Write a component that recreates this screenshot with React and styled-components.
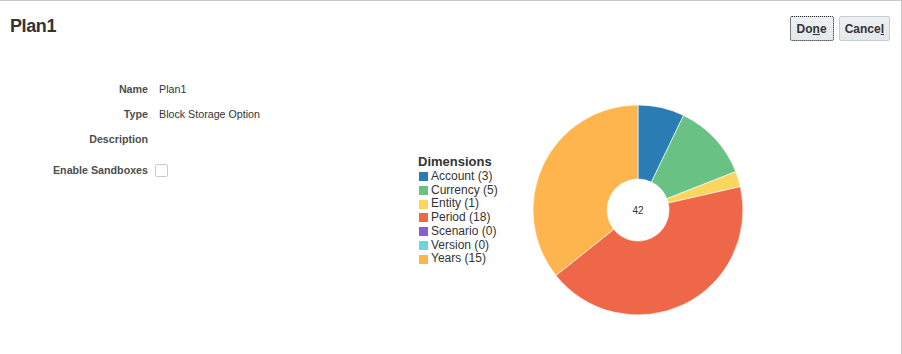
import React from "react";
import styled, { createGlobalStyle } from "styled-components";

const dimensions = [
  { name: "Account", count: 3, color: "#2a7db4" },
  { name: "Currency", count: 5, color: "#69c283" },
  { name: "Entity", count: 1, color: "#fbd65e" },
  { name: "Period", count: 18, color: "#ee6749" },
  { name: "Scenario", count: 0, color: "#8a5fcb" },
  { name: "Version", count: 0, color: "#6ad8da" },
  { name: "Years", count: 15, color: "#ffb54e" },
];

const fields = [
  { label: "Name", value: "Plan1" },
  { label: "Type", value: "Block Storage Option" },
  { label: "Description", value: "" },
];

function point(cx, cy, r, deg) {
  const a = ((deg - 90) * Math.PI) / 180;
  return [cx + r * Math.cos(a), cy + r * Math.sin(a)];
}

function slicePath(cx, cy, r, ir, start, end) {
  const large = end - start > 180 ? 1 : 0;
  const [x1, y1] = point(cx, cy, r, start);
  const [x2, y2] = point(cx, cy, r, end);
  const [x3, y3] = point(cx, cy, ir, end);
  const [x4, y4] = point(cx, cy, ir, start);
  return `M${x1} ${y1} A${r} ${r} 0 ${large} 1 ${x2} ${y2} L${x3} ${y3} A${ir} ${ir} 0 ${large} 0 ${x4} ${y4} Z`;
}

function Donut() {
  const total = dimensions.reduce((s, d) => s + d.count, 0);
  let angle = 0;
  const size = 212;
  const c = size / 2;
  return (
    <svg width={size} height={size} viewBox={`0 0 ${size} ${size}`}>
      {dimensions
        .filter((d) => d.count > 0)
        .map((d) => {
          const start = angle;
          angle += (d.count / total) * 360;
          return (
            <path
              key={d.name}
              d={slicePath(c, c, 105, 31, start, angle)}
              fill={d.color}
              stroke="#fff"
              strokeWidth="0.6"
            />
          );
        })}
      <text
        x={c}
        y={c + 3.5}
        textAnchor="middle"
        fontFamily="Liberation Sans, Arial, sans-serif"
        fontSize="10"
        fill="#333"
      >
        {total}
      </text>
    </svg>
  );
}

export default function App() {
  return (
    <>
      <GlobalStyle />
      <Page>
        <Header>
          <Title>Plan1</Title>
          <Toolbar>
            <Button $focused>
              Do<u>n</u>e
            </Button>
            <Button>
              Cance<u>l</u>
            </Button>
          </Toolbar>
        </Header>
        <Body>
          <Form>
            {fields.map((f) => (
              <React.Fragment key={f.label}>
                <Label>{f.label}</Label>
                <Value>{f.value}</Value>
              </React.Fragment>
            ))}
            <Label $spaced>Enable Sandboxes</Label>
            <Value $spaced>
              <Checkbox />
            </Value>
          </Form>
          <Chart>
            <Legend>
              <LegendTitle>Dimensions</LegendTitle>
              {dimensions.map((d) => (
                <LegendItem key={d.name}>
                  <Swatch $color={d.color} />
                  {d.name} ({d.count})
                </LegendItem>
              ))}
            </Legend>
            <Donut />
          </Chart>
        </Body>
      </Page>
    </>
  );
}

const GlobalStyle = createGlobalStyle`
  body {
    margin: 0;
    background: #fff;
    font-family: "Liberation Sans", Arial, sans-serif;
    color: #333;
  }
`;

const Page = styled.div`
  width: 902px;
  height: 354px;
  box-sizing: border-box;
  border-top: 1px solid #c9c9c9;
  border-right: 1px solid #c9c9c9;
  overflow: hidden;
`;

const Header = styled.div`
  display: flex;
  justify-content: space-between;
  align-items: flex-start;
  height: 59px;
  padding: 0 11px 0 10px;
`;

const Title = styled.h1`
  margin: 15px 0 0;
  font-size: 18px;
  line-height: 20px;
  font-weight: bold;
  letter-spacing: -0.4px;
  color: #333;
`;

const Toolbar = styled.div`
  display: flex;
  gap: 5px;
  margin-top: 15px;
`;

const Button = styled.button`
  height: 25px;
  padding: 0 ${(p) => (p.$focused ? "6px" : "5px")};
  font-family: "Liberation Sans", Arial, sans-serif;
  font-size: 12px;
  font-weight: bold;
  color: #333;
  background: linear-gradient(#eef1f3, #e3e8eb);
  border: 1px solid #c4ccd4;
  border-radius: 2px;
  outline: ${(p) => (p.$focused ? "1px dotted #333" : "none")};
  outline-offset: -1px;
  u {
    text-decoration-thickness: 1px;
  }
`;

const Body = styled.div`
  display: grid;
  grid-template-columns: 418px auto;
`;

const Form = styled.div`
  display: grid;
  grid-template-columns: 148px auto;
  grid-auto-rows: 25px;
  column-gap: 11px;
  align-items: center;
  align-content: start;
  padding-top: 16px;
`;

const Label = styled.div`
  text-align: right;
  font-size: 10.7px;
  font-weight: bold;
  color: #4d4d4d;
  margin-top: ${(p) => (p.$spaced ? "13px" : "0")};
`;

const Value = styled.div`
  display: flex;
  align-items: center;
  font-size: 10.7px;
  color: #333;
  margin-top: ${(p) => (p.$spaced ? "13px" : "0")};
`;

const Checkbox = styled.span`
  display: block;
  width: 13px;
  height: 13px;
  margin-left: -4px;
  box-sizing: border-box;
  border: 1px solid #ccc;
  border-radius: 2px;
  background: #fff;
`;

const Chart = styled.div`
  display: flex;
  align-items: center;
  margin-top: 44px;
`;

const Legend = styled.div`
  width: 114px;
`;

const LegendTitle = styled.div`
  font-size: 13px;
  font-weight: bold;
  line-height: 16px;
  color: #333;
`;

const LegendItem = styled.div`
  display: flex;
  align-items: center;
  gap: 3px;
  font-size: 12px;
  line-height: 13.67px;
  color: #333;
`;

const Swatch = styled.span`
  width: 9px;
  height: 9px;
  margin-left: 1px;
  background: ${(p) => p.$color};
`;
